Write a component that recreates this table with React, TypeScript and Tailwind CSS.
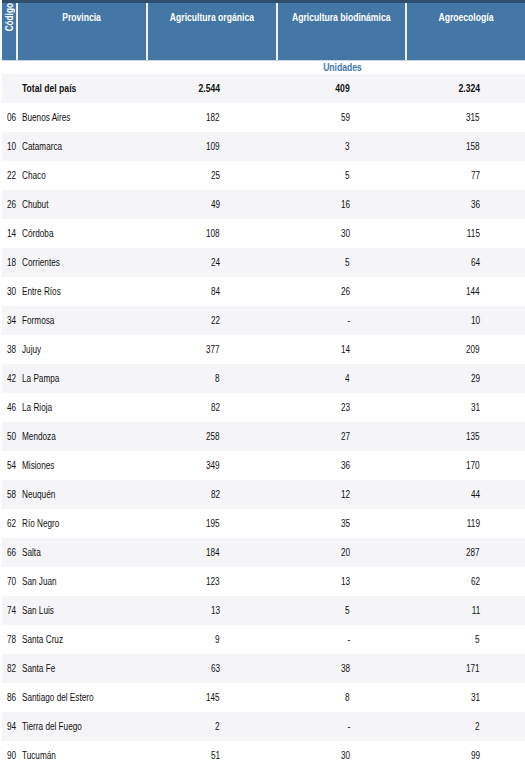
import React from "react";

type Row = { code: string; name: string; org: string; bio: string; agro: string };

const rows: Row[] = [
  { code: "06", name: "Buenos Aires", org: "182", bio: "59", agro: "315" },
  { code: "10", name: "Catamarca", org: "109", bio: "3", agro: "158" },
  { code: "22", name: "Chaco", org: "25", bio: "5", agro: "77" },
  { code: "26", name: "Chubut", org: "49", bio: "16", agro: "36" },
  { code: "14", name: "Córdoba", org: "108", bio: "30", agro: "115" },
  { code: "18", name: "Corrientes", org: "24", bio: "5", agro: "64" },
  { code: "30", name: "Entre Ríos", org: "84", bio: "26", agro: "144" },
  { code: "34", name: "Formosa", org: "22", bio: "-", agro: "10" },
  { code: "38", name: "Jujuy", org: "377", bio: "14", agro: "209" },
  { code: "42", name: "La Pampa", org: "8", bio: "4", agro: "29" },
  { code: "46", name: "La Rioja", org: "82", bio: "23", agro: "31" },
  { code: "50", name: "Mendoza", org: "258", bio: "27", agro: "135" },
  { code: "54", name: "Misiones", org: "349", bio: "36", agro: "170" },
  { code: "58", name: "Neuquén", org: "82", bio: "12", agro: "44" },
  { code: "62", name: "Río Negro", org: "195", bio: "35", agro: "119" },
  { code: "66", name: "Salta", org: "184", bio: "20", agro: "287" },
  { code: "70", name: "San Juan", org: "123", bio: "13", agro: "62" },
  { code: "74", name: "San Luis", org: "13", bio: "5", agro: "11" },
  { code: "78", name: "Santa Cruz", org: "9", bio: "-", agro: "5" },
  { code: "82", name: "Santa Fe", org: "63", bio: "38", agro: "171" },
  { code: "86", name: "Santiago del Estero", org: "145", bio: "8", agro: "31" },
  { code: "94", name: "Tierra del Fuego", org: "2", bio: "-", agro: "2" },
  { code: "90", name: "Tucumán", org: "51", bio: "30", agro: "99" },
];

// narrow look: Arial-width font squeezed horizontally
const L = ({ children }: { children: React.ReactNode }) => (
  <span className="inline-block whitespace-nowrap scale-x-[0.82] origin-left">{children}</span>
);
const R = ({ children }: { children: React.ReactNode }) => (
  <span className="inline-block whitespace-nowrap scale-x-[0.82] origin-right">{children}</span>
);
// bold variants are a bit wider in the reference
const BL = ({ children }: { children: React.ReactNode }) => (
  <span className="inline-block whitespace-nowrap scale-x-[0.86] origin-left">{children}</span>
);
const BR = ({ children }: { children: React.ReactNode }) => (
  <span className="inline-block whitespace-nowrap scale-x-[0.86] origin-right">{children}</span>
);
const BC = ({ children }: { children: React.ReactNode }) => (
  <span className="inline-block whitespace-nowrap scale-x-[0.86]">{children}</span>
);

export default function App() {
  return (
    <div className="w-[525px] h-[768px] bg-white overflow-hidden text-[10px] text-[#111] font-['Liberation_Sans',Arial,sans-serif]">
      {/* Header */}
      <div className="ml-[2px] h-[61px] bg-[#4477a5] border-t-[3px] border-[#2d4f6d] border-b border-b-[#c9d6e2] flex text-white font-bold text-[10px]">
        <div className="w-[16px] shrink-0 relative border-r-2 border-white/90">
          <span className="absolute left-[2px] top-[-3px] [writing-mode:vertical-rl] rotate-180 scale-y-[0.82] leading-[11px] whitespace-nowrap">
            Código
          </span>
        </div>
        <div className="w-[130px] shrink-0 border-r-2 border-white/90 text-center pt-[7px]"><BC>Provincia</BC></div>
        <div className="w-[130px] shrink-0 border-r-2 border-white/90 text-center pt-[7px]"><BC>Agricultura orgánica</BC></div>
        <div className="w-[129px] shrink-0 border-r-2 border-white/90 text-center pt-[7px]"><BC>Agricultura biodinámica</BC></div>
        <div className="flex-1 text-center pt-[7px]"><BC>Agroecología</BC></div>
      </div>

      {/* Units */}
      <div className="h-[13px] flex items-center">
        <div className="w-[278px]" />
        <div className="w-[129px] text-center text-[10px] font-bold text-[#3f78ad] leading-none"><BC>Unidades</BC></div>
      </div>

      {/* Rows */}
      <div className="ml-[2px]">
        <div className="h-[29px] bg-[#f5f5f7] flex items-center font-bold">
          <div className="w-[147px] pl-[20px]"><BL>Total del país</BL></div>
          <div className="w-[71px] text-right"><BR>2.544</BR></div>
          <div className="w-[130px] text-right"><BR>409</BR></div>
          <div className="w-[130px] text-right"><BR>2.324</BR></div>
        </div>
        {rows.map((r, i) => (
          <div
            key={r.code}
            className={`h-[29px] flex items-center ${i % 2 === 1 ? "bg-[#f5f5f7]" : "bg-white"}`}
          >
            <div className="w-[20px] pl-[5px]"><L>{r.code}</L></div>
            <div className="w-[127px]"><L>{r.name}</L></div>
            <div className="w-[71px] text-right"><R>{r.org}</R></div>
            <div className="w-[130px] text-right"><R>{r.bio}</R></div>
            <div className="w-[130px] text-right"><R>{r.agro}</R></div>
          </div>
        ))}
      </div>
    </div>
  );
}
